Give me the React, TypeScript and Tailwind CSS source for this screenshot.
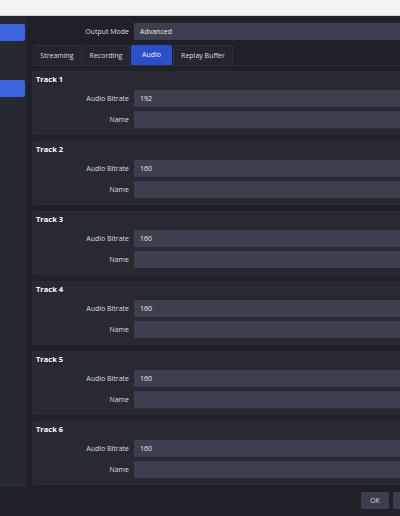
import React from "react";

const tracks = [
  { n: 1, bitrate: "192" },
  { n: 2, bitrate: "160" },
  { n: 3, bitrate: "160" },
  { n: 4, bitrate: "160" },
  { n: 5, bitrate: "160" },
  { n: 6, bitrate: "160" },
];

function Row({ label, value, lw }: { label: string; value?: string; lw: string }) {
  return (
    <div className="flex items-center h-[17px]">
      <div className={lw + " pr-[1px] text-right text-[7px] text-[#dcdde2] leading-[17px]"}>{label}</div>
      <div className="ml-[4px] flex-1 h-[17px] bg-[#3c3f4e] rounded-[1px] pl-[6px] text-[7px] leading-[17px] text-[#eaeaee]">
        {value}
      </div>
    </div>
  );
}

const tabs = [
  { t: "Streaming", w: "w-[48px]", active: false },
  { t: "Recording", w: "w-[48px]", active: false },
  { t: "Audio", w: "w-[41px]", active: true },
  { t: "Replay Buffer", w: "w-[60px]", active: false },
];

export default function App() {
  return (
    <div
      className="w-[400px] h-[516px] overflow-hidden bg-[#1f2028]"
      style={{ fontFamily: '"Open Sans", "Noto Sans", sans-serif' }}
    >
      <div className="w-[490px] h-[516px] flex flex-col">
        <div className="h-[16px] bg-[#f3f3f3] border-b border-[#d4d4d4] shrink-0" />
        <div className="flex h-[471px] shrink-0">
          <div className="w-[27px] bg-[#272932] flex flex-col pt-[8px] gap-[39px] shrink-0">
            <div className="h-[17px] w-[25px] bg-[#3d63dd] rounded-r-[2px]" />
            <div className="h-[17px] w-[25px] bg-[#3d63dd] rounded-r-[2px]" />
          </div>
          <div className="flex-1 flex flex-col pl-[5px]">
            <div className="pt-[7px]">
              <Row label="Output Mode" value="Advanced" lw="w-[98px]" />
            </div>
            <div className="mt-[5px] flex gap-[1px] h-[20px] pl-[1px]">
              {tabs.map((tb) => (
                <div
                  key={tb.t}
                  className={
                    tb.w +
                    " h-[20px] text-center text-[7px] leading-[20px] rounded-t-[2px] " +
                    (tb.active
                      ? "bg-[#2b4fc9] text-[#f0f2ff]"
                      : "bg-[#24252d] border-t border-l border-r border-[#2e2f38] text-[#dcdde2]")
                  }
                >
                  {tb.t}
                </div>
              ))}
            </div>
            <div className="flex-1 border-t border-[#2b2c35] pt-[5px] flex flex-col gap-[6px]">
              {tracks.map((tr) => (
                <div key={tr.n} className="h-[64px] bg-[#282932] border border-[#2b2c35] rounded-[2px] flex flex-col">
                  <div className="h-[14px] leading-[14px] pl-[3px] text-[7.5px] font-bold text-white">Track {tr.n}</div>
                  <div className="mt-[4px] flex flex-col gap-[4px]">
                    <Row label="Audio Bitrate" value={tr.bitrate} lw="w-[97px]" />
                    <Row label="Name" lw="w-[97px]" />
                  </div>
                </div>
              ))}
            </div>
          </div>
        </div>
        <div className="flex-1 flex justify-end items-start pt-[5px] pr-[4px] gap-[4px]">
          <div className="w-[28px] h-[17px] bg-[#3c3f4e] rounded-[2px] text-center text-[7px] leading-[17px] text-[#d4d5da]">OK</div>
          <div className="w-[53px] h-[17px] bg-[#3c3f4e] rounded-[2px] text-center text-[7px] leading-[17px] text-[#d4d5da]">Cancel</div>
          <div className="w-[36px] h-[17px] bg-[#3c3f4e] rounded-[2px] text-center text-[7px] leading-[17px] text-[#d4d5da]">Apply</div>
        </div>
      </div>
    </div>
  );
}
